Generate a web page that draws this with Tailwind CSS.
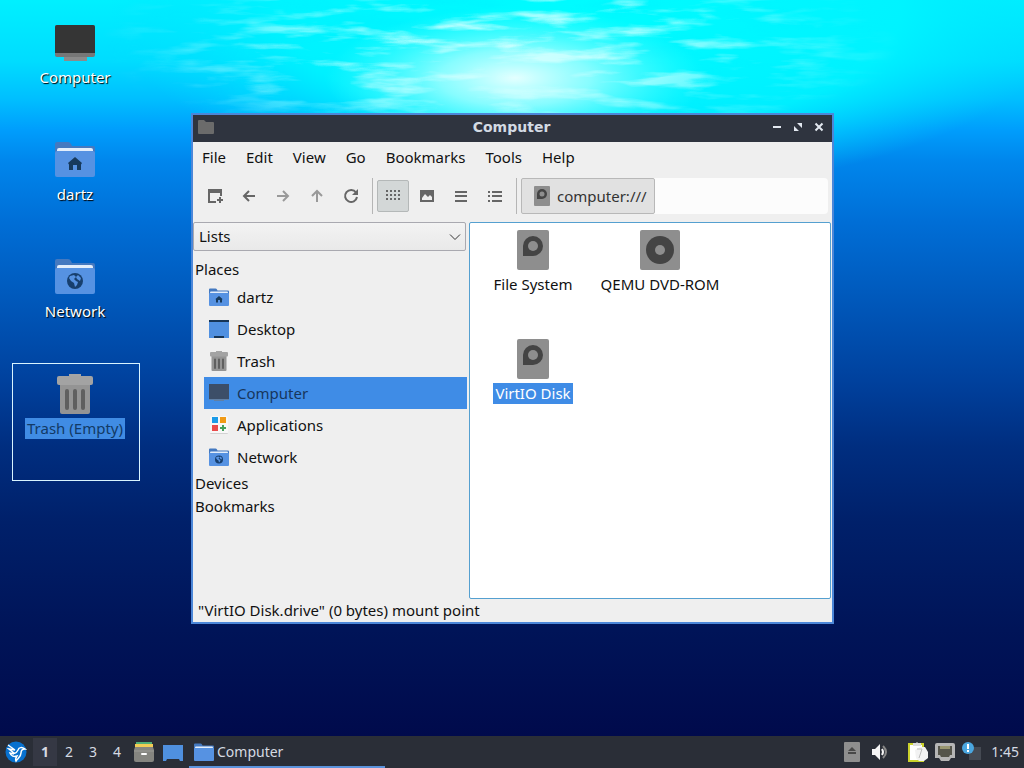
<!DOCTYPE html>
<html lang="en">
<head>
<meta charset="utf-8">
<meta name="viewport" content="width=device-width, initial-scale=1">
<title>Desktop</title>
<script src="https://cdn.jsdelivr.net/npm/@tailwindcss/browser@4"></script>
</head>
<body class="relative flex h-screen flex-col overflow-hidden bg-[#001560] font-['Noto_Sans','Open_Sans',sans-serif] text-[15px] leading-[21px] text-[#111]">

<!-- Wallpaper -->
<svg class="absolute inset-0 h-full w-full" viewBox="0 0 1024 768" preserveAspectRatio="none" aria-hidden="true">
  <defs>
    <linearGradient id="sea" x1="0" y1="0" x2="0" y2="1">
      <stop offset="0" stop-color="#00f0ff"/><stop offset=".08" stop-color="#00dcff"/><stop offset=".13" stop-color="#00beff"/>
      <stop offset=".17" stop-color="#009dfc"/><stop offset=".21" stop-color="#0086ec"/><stop offset=".29" stop-color="#006ed6"/>
      <stop offset=".4" stop-color="#0056b8"/><stop offset=".5" stop-color="#00409c"/><stop offset=".58" stop-color="#002e80"/>
      <stop offset=".68" stop-color="#00206a"/><stop offset=".82" stop-color="#001458"/><stop offset="1" stop-color="#000748"/>
    </linearGradient>
    <radialGradient id="cyan" gradientUnits="userSpaceOnUse" cx="0" cy="0" r="1" gradientTransform="translate(590 10) scale(480 185)">
      <stop offset="0" stop-color="#00fcff"/><stop offset=".65" stop-color="#00f4ff" stop-opacity=".9"/><stop offset="1" stop-color="#00e0ff" stop-opacity="0"/>
    </radialGradient>
    <radialGradient id="sun" gradientUnits="userSpaceOnUse" cx="0" cy="0" r="1" gradientTransform="translate(515 78) scale(190 70)">
      <stop offset="0" stop-color="#e4ffff"/><stop offset=".4" stop-color="#a8ffff" stop-opacity=".8"/><stop offset="1" stop-color="#50ffff" stop-opacity="0"/>
    </radialGradient>
    <radialGradient id="fade" gradientUnits="userSpaceOnUse" cx="0" cy="0" r="1" gradientTransform="translate(500 45) scale(400 110)">
      <stop offset="0" stop-color="#fff"/><stop offset=".5" stop-color="#999"/><stop offset="1" stop-color="#000"/>
    </radialGradient>
    <mask id="surface"><rect width="1024" height="170" fill="url(#fade)"/></mask>
    <filter id="ripple" x="0" y="0" width="1" height="1">
      <feTurbulence type="fractalNoise" baseFrequency=".014 .08" numOctaves="4" seed="8"/>
      <feColorMatrix values="0 0 0 0 .65  0 0 0 0 1  0 0 0 0 1  3.500 0 0 0 -1.700"/>
    </filter>
    <filter id="trough" x="0" y="0" width="1" height="1">
      <feTurbulence type="fractalNoise" baseFrequency=".01 .06" numOctaves="3" seed="21"/>
      <feColorMatrix values="0 0 0 0 0  0 0 0 0 .85  0 0 0 0 1  3 0 0 0 -1.500"/>
    </filter>
  </defs>
  <rect width="1024" height="768" fill="url(#sea)"/>
  <rect width="1024" height="240" fill="url(#cyan)"/>
  <rect width="1024" height="170" filter="url(#trough)" mask="url(#surface)" opacity=".55"/>
  <rect width="1024" height="170" fill="url(#sun)"/>
  <rect width="1024" height="170" filter="url(#ripple)" mask="url(#surface)"/>
</svg>

<!-- Shared icons -->
<svg class="hidden" aria-hidden="true">
  <symbol id="i-computer" viewBox="0 0 40 40"><path d="M9 35h23v4H9z" fill="#8b8b8b"/><rect y="3" width="40" height="32" rx="2" fill="#777"/><path d="M0 5q0-2 2-2h36q2 0 2 2v26H0z" fill="#353535"/></symbol>
  <symbol id="i-folder" viewBox="0 0 40 40"><path d="M0 5q0-2 2-2h11q2 0 3 2l1 2h21q2 0 2 2v16H0z" fill="#4479c0"/><path d="M2 11q0-2 2-2h32q2 0 2 2v8H2z" fill="#e3eefb"/><rect y="12" width="40" height="26" rx="2" fill="#5692e2"/></symbol>
  <symbol id="i-home" viewBox="0 0 40 40"><use href="#i-folder"/><path d="M20 18l7 6-1 1.500V31h-4v-5h-4v5h-4v-5.500L13 24z" fill="#173a5c"/></symbol>
  <symbol id="i-net" viewBox="0 0 40 40"><use href="#i-folder"/><circle cx="20" cy="25" r="8" fill="#173f6e"/><path d="M15 20l4-1 2 2-2 2 2 2 2 1-1 3-2 2-1-4-3-2-2-3zm8-1l3 3-1 3-3-2-1-2z" fill="#5692e2"/></symbol>
  <symbol id="i-trash" viewBox="0 0 40 40"><path d="M14 0h12v4H14z" fill="#a5a5a5"/><path d="M5 10h30v28q0 2-2 2H7q-2 0-2-2z" fill="#949494"/><rect x="2" y="2" width="36" height="9" rx="2" fill="#a3a3a3"/><path d="M12 17v17M20 17v17M28 17v17" stroke="#5f5f5f" stroke-width="4" stroke-linecap="round"/></symbol>
  <symbol id="i-disk" viewBox="0 0 32 40"><rect width="32" height="40" rx="2" fill="#8e8e8e"/><path d="M16 6a10 10 0 1 1 0 20H6V16A10 10 0 0 1 16 6z" fill="#444"/><circle cx="16" cy="16" r="5" fill="#8e8e8e"/></symbol>
  <symbol id="i-dvd" viewBox="0 0 40 40"><rect width="40" height="40" rx="2" fill="#8e8e8e"/><circle cx="20" cy="20" r="14" fill="#444"/><circle cx="20" cy="20" r="5" fill="#8e8e8e"/></symbol>
</svg>

<main class="relative min-h-0 flex-1">
  <ul class="flex w-35 flex-col pt-3 pl-3 text-white">
    <li class="flex h-[117px] flex-col items-center gap-[5px] pt-[10px] pr-[2px] [text-shadow:1px_1px_1px_#000]"><svg class="size-10"><use href="#i-computer"/></svg><span>Computer</span></li>
    <li class="flex h-[117px] flex-col items-center gap-[5px] pt-[10px] pr-[2px] [text-shadow:1px_1px_1px_#000]"><svg class="size-10"><use href="#i-home"/></svg><span>dartz</span></li>
    <li class="flex h-[117px] flex-col items-center gap-[5px] pt-[10px] pr-[2px] [text-shadow:1px_1px_1px_#000]"><svg class="size-10"><use href="#i-net"/></svg><span>Network</span></li>
    <li class="flex h-[118px] flex-col items-center gap-1 border border-[#d8f4ff] pt-[10px] pr-[2px] text-[#123a66]"><svg class="size-10"><use href="#i-trash"/></svg><span class="bg-[#408ce4] px-[2px]">Trash (Empty)</span></li>
  </ul>

  <section aria-label="Computer" class="absolute top-[113px] left-[191px] flex h-[511px] w-[643px] flex-col border-2 border-[#4c87d8] bg-[#efefef]">
    <header class="flex h-[27px] items-center bg-[#2f343f] px-[5px] pb-[3px] text-[#d3dae3]">
      <svg class="h-4 w-14" viewBox="0 0 56 16" preserveAspectRatio="xMinYMid"><path d="M0 2q0-1 1-1h5l2 2h7q1 0 1 1v10q0 1-1 1H1q-1 0-1-1z" fill="#6b6b6b"/></svg>
      <h1 class="flex-1 text-center font-['DejaVu_Sans','Noto_Sans',sans-serif] text-sm font-bold">Computer</h1>
      <div class="flex gap-[5px]">
        <button aria-label="Minimize"><svg class="size-4" viewBox="0 0 16 16"><path d="M4 7h8v2H4z" fill="#e3e8f0"/></svg></button>
        <button aria-label="Maximize"><svg class="size-4" viewBox="0 0 16 16"><path d="M7 4h5v5zM4 7v5h5z" fill="#e3e8f0"/></svg></button>
        <button aria-label="Close"><svg class="size-4" viewBox="0 0 16 16"><path d="M4.500 4.500l7 7m0-7l-7 7" stroke="#e3e8f0" stroke-width="2"/></svg></button>
      </div>
    </header>

    <nav class="flex h-[30px] items-center gap-5 px-[9px]">
      <button>File</button><button>Edit</button><button>View</button><button>Go</button><button>Bookmarks</button><button>Tools</button><button>Help</button>
    </nav>

    <div class="flex h-12 items-center pr-1 pl-[6px] text-[#666]">
      <div class="flex gap-[2px]">
        <button aria-label="New tab" class="grid size-8 place-items-center"><svg class="size-4" viewBox="0 0 16 16" fill="none" stroke="currentColor"><path d="M1 1h14v4H1z" fill="currentColor" stroke="none"/><path d="M9 14H2V4m12 0v4" stroke-width="2"/><path d="M13 9v6m-3-3h6" stroke-width="2"/></svg></button>
        <button aria-label="Back" class="grid size-8 place-items-center"><svg class="size-4" viewBox="0 0 16 16" fill="none" stroke="currentColor" stroke-width="2"><path d="M14 8H3m5-5L3 8l5 5"/></svg></button>
        <button aria-label="Forward" class="grid size-8 place-items-center text-[#999]"><svg class="size-4" viewBox="0 0 16 16" fill="none" stroke="currentColor" stroke-width="2"><path d="M2 8h11M8 3l5 5-5 5"/></svg></button>
        <button aria-label="Up" class="grid size-8 place-items-center text-[#999]"><svg class="size-4" viewBox="0 0 16 16" fill="none" stroke="currentColor" stroke-width="2"><path d="M8 14V3M3 8l5-5 5 5"/></svg></button>
        <button aria-label="Reload" class="grid size-8 place-items-center"><svg class="size-4" viewBox="0 0 16 16" fill="none" stroke="currentColor" stroke-width="2"><path d="M13 4.500A6 6 0 1 0 14 9"/><path d="M9 7h6V1z" fill="currentColor" stroke="none"/></svg></button>
      </div>
      <div class="mr-1 ml-[5px] h-9 w-px bg-[#b5b5b5]"></div>
      <div class="flex gap-[2px]">
        <button aria-label="Icon view" aria-pressed="true" class="grid size-8 place-items-center rounded-xs border border-[#b4b8b8] bg-[#d3d7d7]"><svg class="size-4" viewBox="0 0 16 16" fill="none" stroke="currentColor" stroke-width="2" stroke-dasharray="2 2"><path d="M1 3h15M1 7h15M1 11h15"/></svg></button>
        <button aria-label="Thumbnail view" class="grid size-8 place-items-center"><svg class="size-4" viewBox="0 0 16 16"><path d="M1 2h14v12H1zm2 10h10V9l-2-2-2 2-3-3-3 4z" fill="currentColor" fill-rule="evenodd"/></svg></button>
        <button aria-label="Compact view" class="grid size-8 place-items-center"><svg class="size-4" viewBox="0 0 16 16" stroke="currentColor" stroke-width="2"><path d="M2 4h12M2 8h12M2 13h12"/></svg></button>
        <button aria-label="Detailed list" class="grid size-8 place-items-center"><svg class="size-4" viewBox="0 0 16 16" stroke="currentColor" stroke-width="2"><path d="M1 4h2M1 8h2M1 13h2M5 4h10M5 8h10M5 13h10"/></svg></button>
      </div>
      <div class="mr-1 ml-[5px] h-9 w-px bg-[#b5b5b5]"></div>
      <div class="flex flex-1 rounded-sm bg-[#fcfcfc]">
        <button class="flex h-9 w-[134px] items-center gap-[7px] rounded-xs border border-[#b8b8b8] bg-[#e1e1e1] pl-3 text-[#333]"><svg class="h-5 w-4"><use href="#i-disk"/></svg>computer:///</button>
      </div>
    </div>

    <div class="flex min-h-0 flex-1 gap-[2px] pt-[2px] pr-px">
      <aside class="flex w-[274px] flex-col">
        <div class="relative mr-px">
          <select aria-label="Side pane" class="h-[29px] w-full appearance-none rounded-xs border border-[#a9a9b0] bg-linear-to-b from-[#f3f3f3] to-[#e9e9e9] px-[5px]"><option>Lists</option></select>
          <svg class="pointer-events-none absolute top-[9px] right-[5px] size-3" viewBox="0 0 12 12" fill="none" stroke="#333"><path d="M1 3.500l5 5 5-5"/></svg>
        </div>
        <h2 class="mt-2 h-[22px] pl-[2px]">Places</h2>
        <ul class="ml-[11px]">
          <li class="flex h-8 items-center gap-2 pl-[5px]"><svg class="size-5"><use href="#i-home"/></svg>dartz</li>
          <li class="flex h-8 items-center gap-2 pl-[5px]"><svg class="size-5" viewBox="0 0 20 20"><path d="M0 1h20v18H0z" fill="#5090e0"/><path d="M0 1h20v2H0zM5 17h10v2H5z" fill="#173556"/></svg>Desktop</li>
          <li class="flex h-8 items-center gap-2 pl-[5px]"><svg class="size-5"><use href="#i-trash"/></svg>Trash</li>
          <li class="flex h-8 items-center gap-2 bg-[#3f8ce6] pl-[5px] text-[#17365c]"><svg class="size-5" viewBox="0 0 20 20"><path d="M0 1h20v16H0z" fill="#3c4e68"/><path d="M0 16h20v1H0zM5 17h10v1H5z" fill="#6080a6"/></svg>Computer</li>
          <li class="flex h-8 items-center gap-2 pl-[5px]"><svg class="size-5" viewBox="0 0 20 20"><rect x="1" y="1" width="18" height="18" rx="2" fill="#f7f7f7"/><path d="M1 18q0 1 1 1h16q1 0 1-1z" fill="#d2d2d2"/><path d="M3 2h6v6H3z" fill="#1b9be8"/><path d="M11 2h6v6h-6z" fill="#f09a16"/><path d="M3 10h6v6H3z" fill="#e94c4c"/><path d="M14 10v6m-3-3h6" stroke="#43a05a" stroke-width="2"/></svg>Applications</li>
          <li class="flex h-8 items-center gap-2 pl-[5px]"><svg class="size-5"><use href="#i-net"/></svg>Network</li>
        </ul>
        <h2 class="h-[23px] pl-[2px]">Devices</h2>
        <h2 class="h-[23px] pl-[2px]">Bookmarks</h2>
      </aside>
      <ul class="grid min-w-0 flex-1 auto-rows-[109px] grid-cols-[repeat(auto-fill,127px)] rounded-xs border border-[#55a0d0] bg-white pt-[7px]">
        <li class="flex flex-col items-center gap-1 pr-px"><svg class="h-10 w-8"><use href="#i-disk"/></svg><span class="px-[2px]">File System</span></li>
        <li class="flex flex-col items-center gap-1 pr-px"><svg class="size-10"><use href="#i-dvd"/></svg><span class="px-[2px]">QEMU DVD-ROM</span></li>
        <li class="flex flex-col items-center gap-1 pr-px"><svg class="h-10 w-8"><use href="#i-disk"/></svg><span class="bg-[#3f8ce6] px-[2px] text-white">VirtIO Disk</span></li>
      </ul>
    </div>
    <footer class="flex h-[23px] items-center px-[5px]">"VirtIO Disk.drive" (0 bytes) mount point</footer>
  </section>
</main>

<footer class="relative flex h-8 items-center bg-[#2a2e37] text-sm text-[#d5dae2]">
  <button aria-label="Application menu" class="pl-[5px]"><svg class="size-[22px]" viewBox="0 0 22 22"><circle cx="11" cy="11" r="10.500" fill="#0871cf"/><path d="M3 4l7 5-6-1 5 4c2 1 3-1 4-3 1-3 4-3 7-1-3 0-4 1-4 4 0 4-3 5-5 8-1-2 0-3 1-5-3 1-6 0-7-3l4 1" fill="none" stroke="#fff" stroke-width="1.500"/></svg></button>
  <div class="ml-[6px] flex">
    <button class="h-7 w-6 bg-[#353844] font-bold">1</button><button class="h-7 w-6">2</button><button class="h-7 w-6">3</button><button class="h-7 w-6">4</button>
  </div>
  <button aria-label="File manager" class="ml-[5px]"><svg class="size-5" viewBox="0 0 20 20"><path d="M2 0h16v4H2z" fill="#4fae78"/><path d="M1 2h18v5H1z" fill="#f1cc55"/><path d="M1 5h18l1 3v10q0 2-2 2H2q-2 0-2-2V8z" fill="#858580"/><path d="M0 9h20" stroke="#9b9b96"/><rect x="7" y="11" width="6" height="2" rx="1" fill="#fff"/></svg></button>
  <button aria-label="Show desktop" class="ml-[9px]"><svg class="size-5" viewBox="0 0 20 20"><path d="M0 3h20v16h-3l-1-2H4l-1 2H0z" fill="#4f90df"/></svg></button>
  <button class="ml-[6px] flex h-full w-[196px] items-center gap-[3px] border-b-2 border-[#5b93dc] pt-px pl-[5px]"><svg class="size-5"><use href="#i-folder"/></svg>Computer</button>
  <div class="ml-auto flex items-center pr-[5px]">
    <button aria-label="Eject disk" class="mr-3"><svg class="h-5 w-4" viewBox="0 0 16 20"><rect width="16" height="20" rx="1" fill="#8e8e8e"/><path d="M8 5l4 4H4zM4 10h8v2H4z" fill="#484848"/></svg></button>
    <button aria-label="Volume" class="mr-5"><svg class="size-4" viewBox="0 0 16 16"><path d="M0 5h3l5-5v16l-5-5H0z" fill="#f5f5f5"/><path d="M10 5q2 3 0 6" fill="none" stroke="#f5f5f5" stroke-width="2"/><path d="M11 2q6 6 0 12" fill="none" stroke="#888" stroke-width="2"/></svg></button>
    <button aria-label="Clipboard" class="mr-[7px]"><svg class="size-5" viewBox="0 0 20 20"><path d="M1 2h14v17H1z" fill="#fff" stroke="#cbd22c" stroke-width="2"/><path d="M5 1h3l1-1 1 1h3v3H5z" fill="#ddd"/><path d="M7 8l5-3h5l3 5v6l-4 3h-5l-3-3z" fill="#f2f2f2"/><path d="M9 7h5l-3 9" fill="none" stroke="#bbb"/></svg></button>
    <button aria-label="Wired network" class="mr-[7px]"><svg class="size-5" viewBox="0 0 20 20"><path d="M0 3q0-2 2-2h16q2 0 2 2v13h-4l-2 3H6l-2-3H0z" fill="#b5b5b5"/><path d="M3 4h14v9h-2l-1 2H6l-1-2H3z" fill="#55554b"/><path d="M6 4v3m2-3v3m2-3v3m2-3v3m2-3v3" stroke="#ded996"/></svg></button>
    <button aria-label="Updates" class="mr-[9px]"><svg class="size-5" viewBox="0 0 20 20"><path d="M7 5h12v13H7z" fill="#454a53"/><circle cx="6" cy="6" r="6" fill="#4aa6df"/><path d="M6 2v5m0 1v2" stroke="#fff" stroke-width="2"/></svg></button>
    <time>1:45</time>
  </div>
</footer>
</body>
</html>
